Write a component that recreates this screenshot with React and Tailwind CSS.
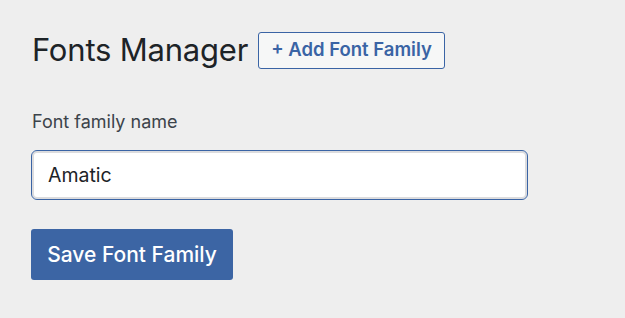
export default function App() {
  return (
    <div
      className="min-h-screen w-full bg-[#eeeeee] px-[32px] pt-[31px] text-[#1d2327]"
      style={{ fontFamily: 'Inter, "Noto Sans", sans-serif' }}
    >
      {/* Header */}
      <div className="flex items-center gap-[10px]">
        <h1 className="text-[31px] font-normal leading-[38px] tracking-[-0.2px]">Fonts Manager</h1>
        <button className="h-[37px] rounded-[3px] border border-[#3a64a5] bg-[#f6f7f7] px-[12px] text-[18.5px] font-semibold text-[#3a64a5]">
          + Add Font Family
        </button>
      </div>

      {/* Form */}
      <div className="mt-[41px] flex flex-col">
        <label className="text-[18px] leading-[24px] text-[#3c434a]">Font family name</label>
        <div className="mt-[16px] h-[50px] w-[497px] -ml-[1px] rounded-[6px] border border-[#3a64a5] bg-white shadow-[inset_0_0_0_2px_#dcdcde]">
          <input
            defaultValue="Amatic"
            className="h-full w-full bg-transparent px-[16px] text-[19.5px] text-[#1d2327] outline-none"
          />
        </div>
        <div className="mt-[29px]">
          <button className="-ml-[1px] h-[51px] w-[202px] rounded-[3px] bg-[#3c65a4] text-[21px] font-medium text-white">
            Save Font Family
          </button>
        </div>
      </div>
    </div>
  );
}
